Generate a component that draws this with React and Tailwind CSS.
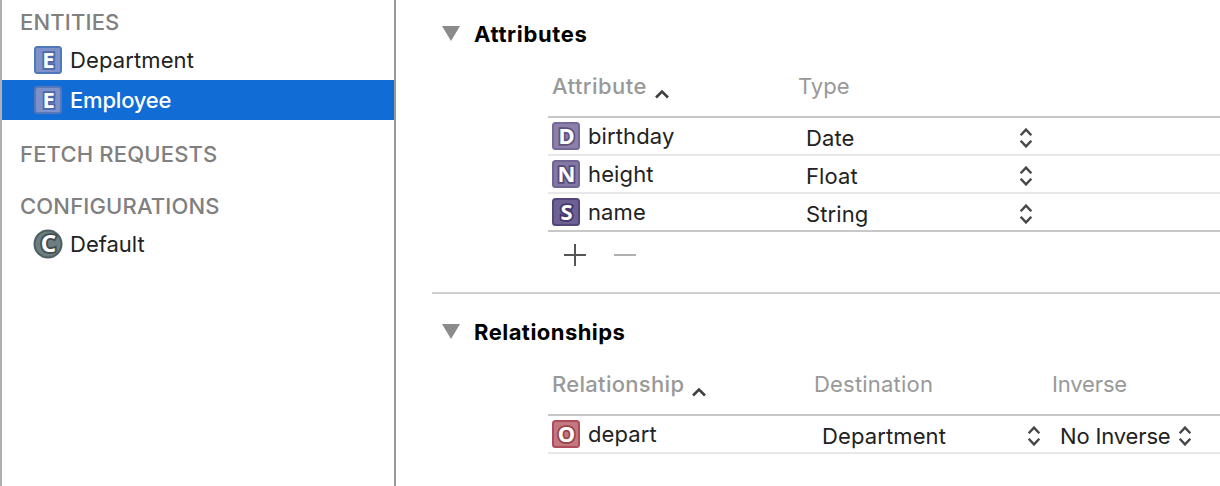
function Badge({ letter, fill, edge, outline, round }) {
  return (
    <svg className="size-7 shrink-0 overflow-visible" viewBox="0 0 28 28">
      {round ? (
        <circle cx="14" cy="14" r="13.5" fill={fill} stroke={edge} strokeWidth="2" />
      ) : (
        <rect x="1" y="1" width="26" height="26" rx="2.5" fill={fill} stroke={edge} strokeWidth="2" />
      )}
      <text
        x="14.5"
        y="22"
        textAnchor="middle"
        fill="#fff"
        stroke={outline}
        strokeWidth="3.6"
        paintOrder="stroke"
        className={round ? "font-['Noto_Sans',sans-serif] text-[24px] font-bold" : "font-['Noto_Sans',sans-serif] text-[22px] font-bold"}
      >
        {letter}
      </text>
    </svg>
  );
}

function Triangle() {
  return (
    <svg className="-mt-0.5 h-[15px] w-[18px] shrink-0" viewBox="0 0 18 15">
      <path d="M0 0H18L9 15Z" fill="#8b8b8b" />
    </svg>
  );
}

function SortCaret() {
  return (
    <svg className="mt-4 ml-2 h-2.5 w-3.5 shrink-0" viewBox="0 0 14 10">
      <path d="M1 8.5L7 2.5L13 8.5" fill="none" stroke="#404040" strokeWidth="2.6" />
    </svg>
  );
}

function Stepper() {
  return (
    <svg className="h-5 w-3 shrink-0" viewBox="0 0 12 20">
      <path d="M0.7 7.3L6 1.6L11.3 7.3M0.7 12.7L6 18.4L11.3 12.7" fill="none" stroke="#484848" strokeWidth="2.4" />
    </svg>
  );
}

function SidebarHeading({ children, className }) {
  return <h2 className={`flex h-10 items-center pl-[18px] font-medium tracking-[0.17px] text-[#808080] ${className}`}>{children}</h2>;
}

function SidebarItem({ badge, children, className = "" }) {
  return (
    <div className={`flex h-10 items-center gap-2 pl-8 ${className}`}>
      {badge}
      <span>{children}</span>
    </div>
  );
}

function SectionTitle({ children, className }) {
  return (
    <div className={`flex h-10 items-center gap-[14px] pl-[46px] font-bold text-black ${className}`}>
      <Triangle />
      <h3>{children}</h3>
    </div>
  );
}

const attributes = [
  { name: "birthday", type: "Date", letter: "D", fill: "#8c7fa8", edge: "#75689a", outline: "#5d5080" },
  { name: "height", type: "Float", letter: "N", fill: "#8377a3", edge: "#706496", outline: "#554a7c" },
  { name: "name", type: "String", letter: "S", fill: "#6d6092", edge: "#53467a", outline: "#43376c" },
];

export default function App() {
  return (
    <div className="flex h-[486px] w-[1220px] overflow-hidden bg-white font-[Inter,sans-serif] text-[22px] leading-9 tracking-[0.12px] whitespace-nowrap text-[#222]">
      <aside className="w-[396px] shrink-0 border-r-2 border-l-2 border-r-[#999] border-l-[#b0b0b0]">
        <SidebarHeading className="pt-1">ENTITIES</SidebarHeading>
        <SidebarItem badge={<Badge letter="E" fill="#7d92c8" edge="#5077bb" outline="#4d68aa" />}>Department</SidebarItem>
        <SidebarItem
          className="bg-[#116cd6] font-medium tracking-[-0.2px] text-white"
          badge={<Badge letter="E" fill="#7d92c8" edge="#5777b9" outline="#4d68aa" />}
        >
          Employee
        </SidebarItem>
        <SidebarHeading className="mt-3.5">FETCH REQUESTS</SidebarHeading>
        <SidebarHeading className="mt-3">CONFIGURATIONS</SidebarHeading>
        <SidebarItem className="-mt-0.5 tracking-normal" badge={<Badge round letter="C" fill="#6d7d80" edge="#4d5f62" outline="#3e4c4f" />}>
          Default
        </SidebarItem>
      </aside>

      <main className="min-w-0 flex-1">
        <section className="pt-3.5">
          <SectionTitle className="tracking-[0.64px]">Attributes</SectionTitle>
          <div className="ml-[152px]">
            <div className="flex h-16 items-center border-b-2 border-[#c8c8c8] pt-0.5">
              <div className="flex w-[250px] items-center pl-1 font-medium tracking-[0.45px] text-[#999]">
                <span>Attribute</span>
                <SortCaret />
              </div>
              <span className="tracking-normal text-[#999]">Type</span>
            </div>
            {attributes.map((a) => (
              <div key={a.name} className="flex h-[38px] items-center border-b-2 border-[#e8e8e8] pl-1 last:border-[#c8c8c8]">
                <Badge {...a} />
                <span className="w-[226px] pl-2">{a.name}</span>
                <span className="w-[214px] pt-1">{a.type}</span>
                <div className="pt-1"><Stepper /></div>
              </div>
            ))}
          </div>
          <div className="ml-[168px] flex h-[60px] gap-7 pt-3">
            <svg className="size-[22px]" viewBox="0 0 22 22">
              <path d="M0 11H22M11 0V22" stroke="#555" strokeWidth="2" />
            </svg>
            <svg className="size-[22px]" viewBox="0 0 22 22">
              <path d="M0 11H22" stroke="#b0b0b0" strokeWidth="2" />
            </svg>
          </div>
        </section>
        <hr className="ml-9 border-t-2 border-[#d0d0d0]" />
        <section className="pt-[18px]">
          <SectionTitle className="tracking-[0.46px]">Relationships</SectionTitle>
          <div className="ml-[152px]">
            <div className="flex h-16 items-center border-b-2 border-[#c8c8c8] pt-0.5">
              <div className="flex w-[266px] items-center pl-1 font-medium tracking-[0.3px] text-[#999]">
                <span>Relationship</span>
                <SortCaret />
              </div>
              <span className="w-[238px] tracking-[0.2px] text-[#999]">Destination</span>
              <span className="tracking-[-0.15px] text-[#999]">Inverse</span>
            </div>
            <div className="flex h-[38px] items-center border-b-2 border-[#e8e8e8] pl-1">
              <Badge letter="O" fill="#c47780" edge="#ad4c5b" outline="#9c4049" />
              <span className="w-[242px] pl-2">depart</span>
              <span className="w-[206px] pt-1">Department</span>
              <div className="pt-1"><Stepper /></div>
              <span className="w-[139px] pt-1 pl-5 tracking-[-0.15px]">No Inverse</span>
              <div className="pt-1"><Stepper /></div>
            </div>
          </div>
        </section>
      </main>
    </div>
  );
}
